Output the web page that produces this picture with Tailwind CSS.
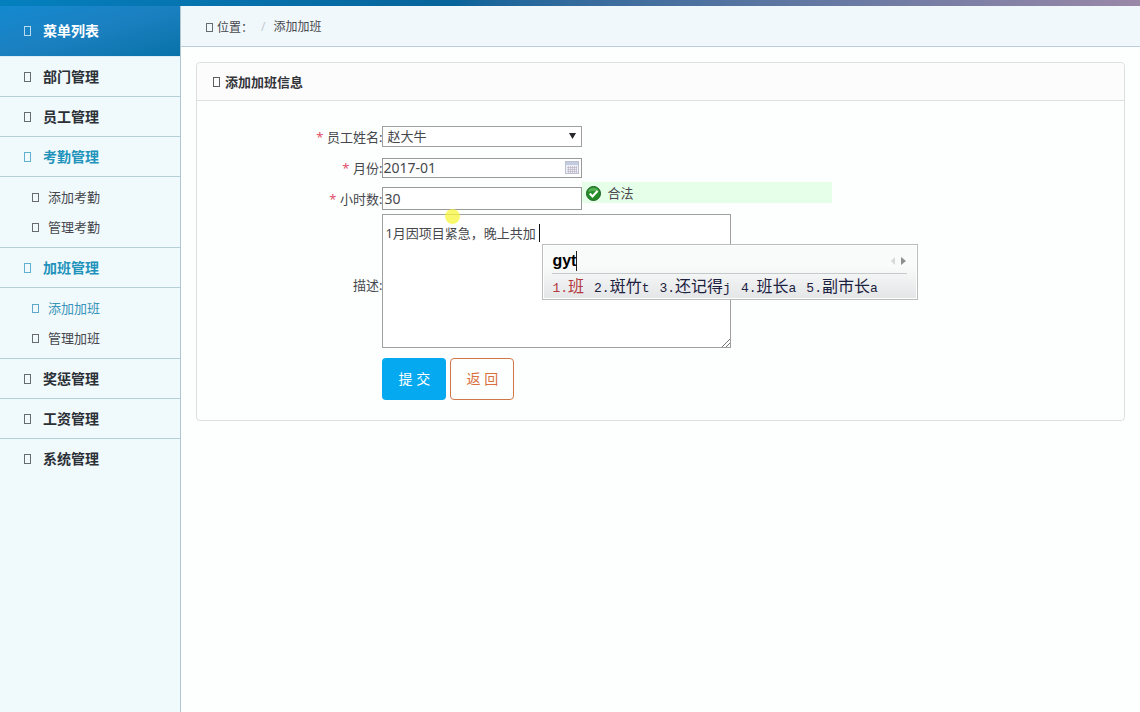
<!DOCTYPE html>
<html lang="zh-CN">
<head>
<meta charset="utf-8">
<meta name="viewport" content="width=device-width, initial-scale=1">
<title>添加加班</title>
<script src="https://cdn.jsdelivr.net/npm/@tailwindcss/browser@4"></script>
</head>
<body class="flex min-h-screen flex-col bg-[#fdfffe] font-['Noto_Sans','Noto_Sans_CJK_SC',sans-serif] text-[13px] leading-5 text-[#46484d]">
  <div class="h-1.5 bg-linear-to-r from-[#0480bf] via-[#07649a] via-40% to-[#9a88a8]"></div>
  <div class="flex flex-1">
    <aside class="w-[181px] shrink-0 border-r border-[#b0c8d4] bg-[#f0f9fc]">
      <h2 class="flex h-[51px] items-center gap-3 border-b border-[#dcecf5] bg-linear-to-br from-[#1489d0] via-[#1b80c0] to-[#0772a8] pl-6 text-sm font-bold text-white">
        <span class="h-2.5 w-[7px] border border-current opacity-70"></span>菜单列表
      </h2>
      <nav class="text-sm font-bold text-[#2b3036]">
        <a href="#" class="flex h-10 items-center gap-3 border-b border-[#b7cfd9] pl-6"><span class="h-2.5 w-[7px] border border-current opacity-70"></span>部门管理</a>
        <a href="#" class="flex h-10 items-center gap-3 border-b border-[#b7cfd9] pl-6"><span class="h-2.5 w-[7px] border border-current opacity-70"></span>员工管理</a>
        <a href="#" class="flex h-10 items-center gap-3 border-b border-[#b7cfd9] pl-6 text-[#2193bb]"><span class="h-2.5 w-[7px] border border-current opacity-70"></span>考勤管理</a>
        <ul class="border-b border-[#b7cfd9] py-[5px] text-[13px] font-normal text-[#46484d]">
          <li><a href="#" class="flex h-[30px] items-center gap-[9px] pl-8"><span class="h-[9px] w-[7px] border border-current opacity-80"></span>添加考勤</a></li>
          <li><a href="#" class="flex h-[30px] items-center gap-[9px] pl-8"><span class="h-[9px] w-[7px] border border-current opacity-80"></span>管理考勤</a></li>
        </ul>
        <a href="#" class="flex h-10 items-center gap-3 border-b border-[#b7cfd9] pl-6 text-[#2193bb]"><span class="h-2.5 w-[7px] border border-current opacity-70"></span>加班管理</a>
        <ul class="border-b border-[#b7cfd9] py-[5px] text-[13px] font-normal text-[#46484d]">
          <li><a href="#" class="flex h-[30px] items-center gap-[9px] pl-8 text-[#3894b8]"><span class="h-[9px] w-[7px] border border-current opacity-80"></span>添加加班</a></li>
          <li><a href="#" class="flex h-[30px] items-center gap-[9px] pl-8"><span class="h-[9px] w-[7px] border border-current opacity-80"></span>管理加班</a></li>
        </ul>
        <a href="#" class="flex h-10 items-center gap-3 border-b border-[#b7cfd9] pl-6"><span class="h-2.5 w-[7px] border border-current opacity-70"></span>奖惩管理</a>
        <a href="#" class="flex h-10 items-center gap-3 border-b border-[#b7cfd9] pl-6"><span class="h-2.5 w-[7px] border border-current opacity-70"></span>工资管理</a>
        <a href="#" class="flex h-10 items-center gap-3 pl-6"><span class="h-2.5 w-[7px] border border-current opacity-70"></span>系统管理</a>
      </nav>
    </aside>

    <div class="min-w-0 flex-1">
      <nav aria-label="位置" class="flex h-[41px] items-center border-b border-[#b9cedb] bg-[#f1f8fc] pt-0.5 pl-[25px] text-xs">
        <span class="mr-1 h-[9px] w-[7px] border border-current opacity-80"></span>
        <span class="font-['Noto_Sans_CJK_TC',sans-serif]">位置：</span>
        <span class="mx-2 text-[#c3c9cf]">/</span>
        <a href="#">添加加班</a>
      </nav>

      <main class="px-[15px] pt-[15px]">
        <section class="rounded border border-[#dbe0de]">
          <h1 class="flex h-[38px] items-center gap-[5px] rounded-t border-b border-[#dbe0de] bg-[#fcfcfc] pl-4 font-bold text-[#33353a]">
            <span class="h-2.5 w-[7px] border border-current opacity-80"></span>添加加班信息
          </h1>
          <form class="grid grid-cols-[1fr_4fr] items-center pt-[25px] pb-5">
            <label for="employee" class="text-right"><span class="text-[#e0506a]">*</span> 员工姓名:</label>
            <div class="relative w-[200px]">
              <select id="employee" class="block h-[21px] w-full appearance-none border border-[#a0a0a0] bg-white px-1 leading-[19px]">
                <option>赵大牛</option>
              </select>
              <svg class="pointer-events-none absolute top-[7px] right-1.5 h-1.5 w-[7px]" viewBox="0 0 7 6" fill="#26282b" aria-hidden="true"><path d="M0 0h7L3.5 6z"/></svg>
            </div>

            <label for="month" class="mt-[11px] text-right"><span class="text-[#e0506a]">*</span> 月份:</label>
            <div class="relative mt-[11px] w-[200px]">
              <input id="month" type="text" value="2017-01" class="block h-5 w-full border border-[#999] bg-white text-sm">
              <svg class="pointer-events-none absolute top-[3px] right-[3px] h-[13px] w-[14px]" viewBox="0 0 14 13" aria-hidden="true">
                <rect x=".5" y=".5" width="13" height="12" fill="#eef0f6" stroke="#bcc1d2"/>
                <rect x="1" y="1" width="12" height="3" fill="#c3cbe3"/>
                <path d="M2 6.5h10M2 8.5h10M2 10.500h10M3.500 5v7M5.500 5v7M7.500 5v7M9.500 5v7M11.500 5v7" stroke="#b5aec0" stroke-width=".6"/>
              </svg>
            </div>

            <label for="hours" class="mt-[9px] text-right"><span class="text-[#e0506a]">*</span> 小时数:</label>
            <div class="mt-1 flex">
              <input id="hours" type="text" value="30" class="mt-[5px] block h-[23px] w-[200px] border border-[#999] bg-white px-px text-sm">
              <p class="flex h-[21px] w-[250px] items-center gap-1.5 bg-[#e6ffe8] pl-1">
                <svg class="mt-0.5 size-[15px]" viewBox="0 0 15 15" aria-hidden="true">
                  <circle cx="7.5" cy="7.5" r="7" fill="#258c2a" stroke="#19621d"/>
                  <path d="M2 6a5.700 5.700 0 0 1 11 0Q8 4 2 6z" fill="#78c56f" opacity=".6"/>
                  <path d="M3.800 7.600l2.700 2.800 5-5.300" fill="none" stroke="#fff" stroke-width="2.200"/>
                </svg>
                合法
              </p>
            </div>

            <label for="description" class="mt-3 text-right">描述:</label>
            <div class="relative mt-1 w-[349px]">
              <textarea id="description" class="block h-[134px] w-full resize-none border border-[#a0a0a0] bg-white px-0.5 py-2 font-['Noto_Sans','Noto_Sans_CJK_TC',sans-serif]">1月因项目紧急，晚上共加</textarea>
              <svg class="pointer-events-none absolute right-px bottom-px size-2" viewBox="0 0 8 8" stroke="#666" stroke-width=".9" aria-hidden="true"><path d="M0 8L8 0M4 8l4-4"/></svg>
              <span class="absolute top-2.5 left-[157px] h-[18px] w-px bg-[#111]"></span>
              <span class="absolute -top-[5px] left-[63px] size-[15px] rounded-full bg-[#f7f53c]/75"></span>

              <!-- 输入法候选窗口 -->
              <div class="absolute top-[30px] left-40 h-14 w-[376px] border border-[#b9bdbc] bg-linear-to-b from-[#f9fafa] from-40% to-[#e3e5e6] pt-1 pr-2.5 pl-[9px] ring-1 ring-white ring-inset">
                <div class="flex h-[25px] items-center border-b border-[#c5cbca]">
                  <span class="border-r border-[#222] font-['Liberation_Sans',sans-serif] text-base leading-5 font-bold text-black">gyt</span>
                  <svg class="mr-px ml-auto h-2 w-4" viewBox="0 0 16 8" aria-hidden="true"><path d="M5 0v8L1 4z" fill="#d5d8d8"/><path d="M11 0v8l5-4z" fill="#8b8f90"/></svg>
                </div>
                <ol class="flex h-7 items-center gap-2.5 font-['Liberation_Mono','Noto_Sans_CJK_SC',monospace] text-[13px] whitespace-nowrap text-[#1c2140]">
                  <li class="text-[#b23a40]">1.<span class="text-base leading-5">班</span></li>
                  <li>2.<span class="text-base leading-5">斑竹</span>t</li>
                  <li>3.<span class="text-base leading-5">还记得</span>j</li>
                  <li>4.<span class="text-base leading-5">班长</span>a</li>
                  <li>5.<span class="text-base leading-5">副市长</span>a</li>
                </ol>
              </div>
            </div>

            <div class="col-start-2 mt-2.5 flex gap-1 text-sm">
              <button type="submit" class="h-[42px] w-16 rounded bg-[#04a9f0] text-white">提 交</button>
              <button type="button" class="h-[42px] w-16 rounded border border-[#d0774a] text-[#d86f3c]">返 回</button>
            </div>
          </form>
        </section>
      </main>
    </div>
  </div>
</body>
</html>
